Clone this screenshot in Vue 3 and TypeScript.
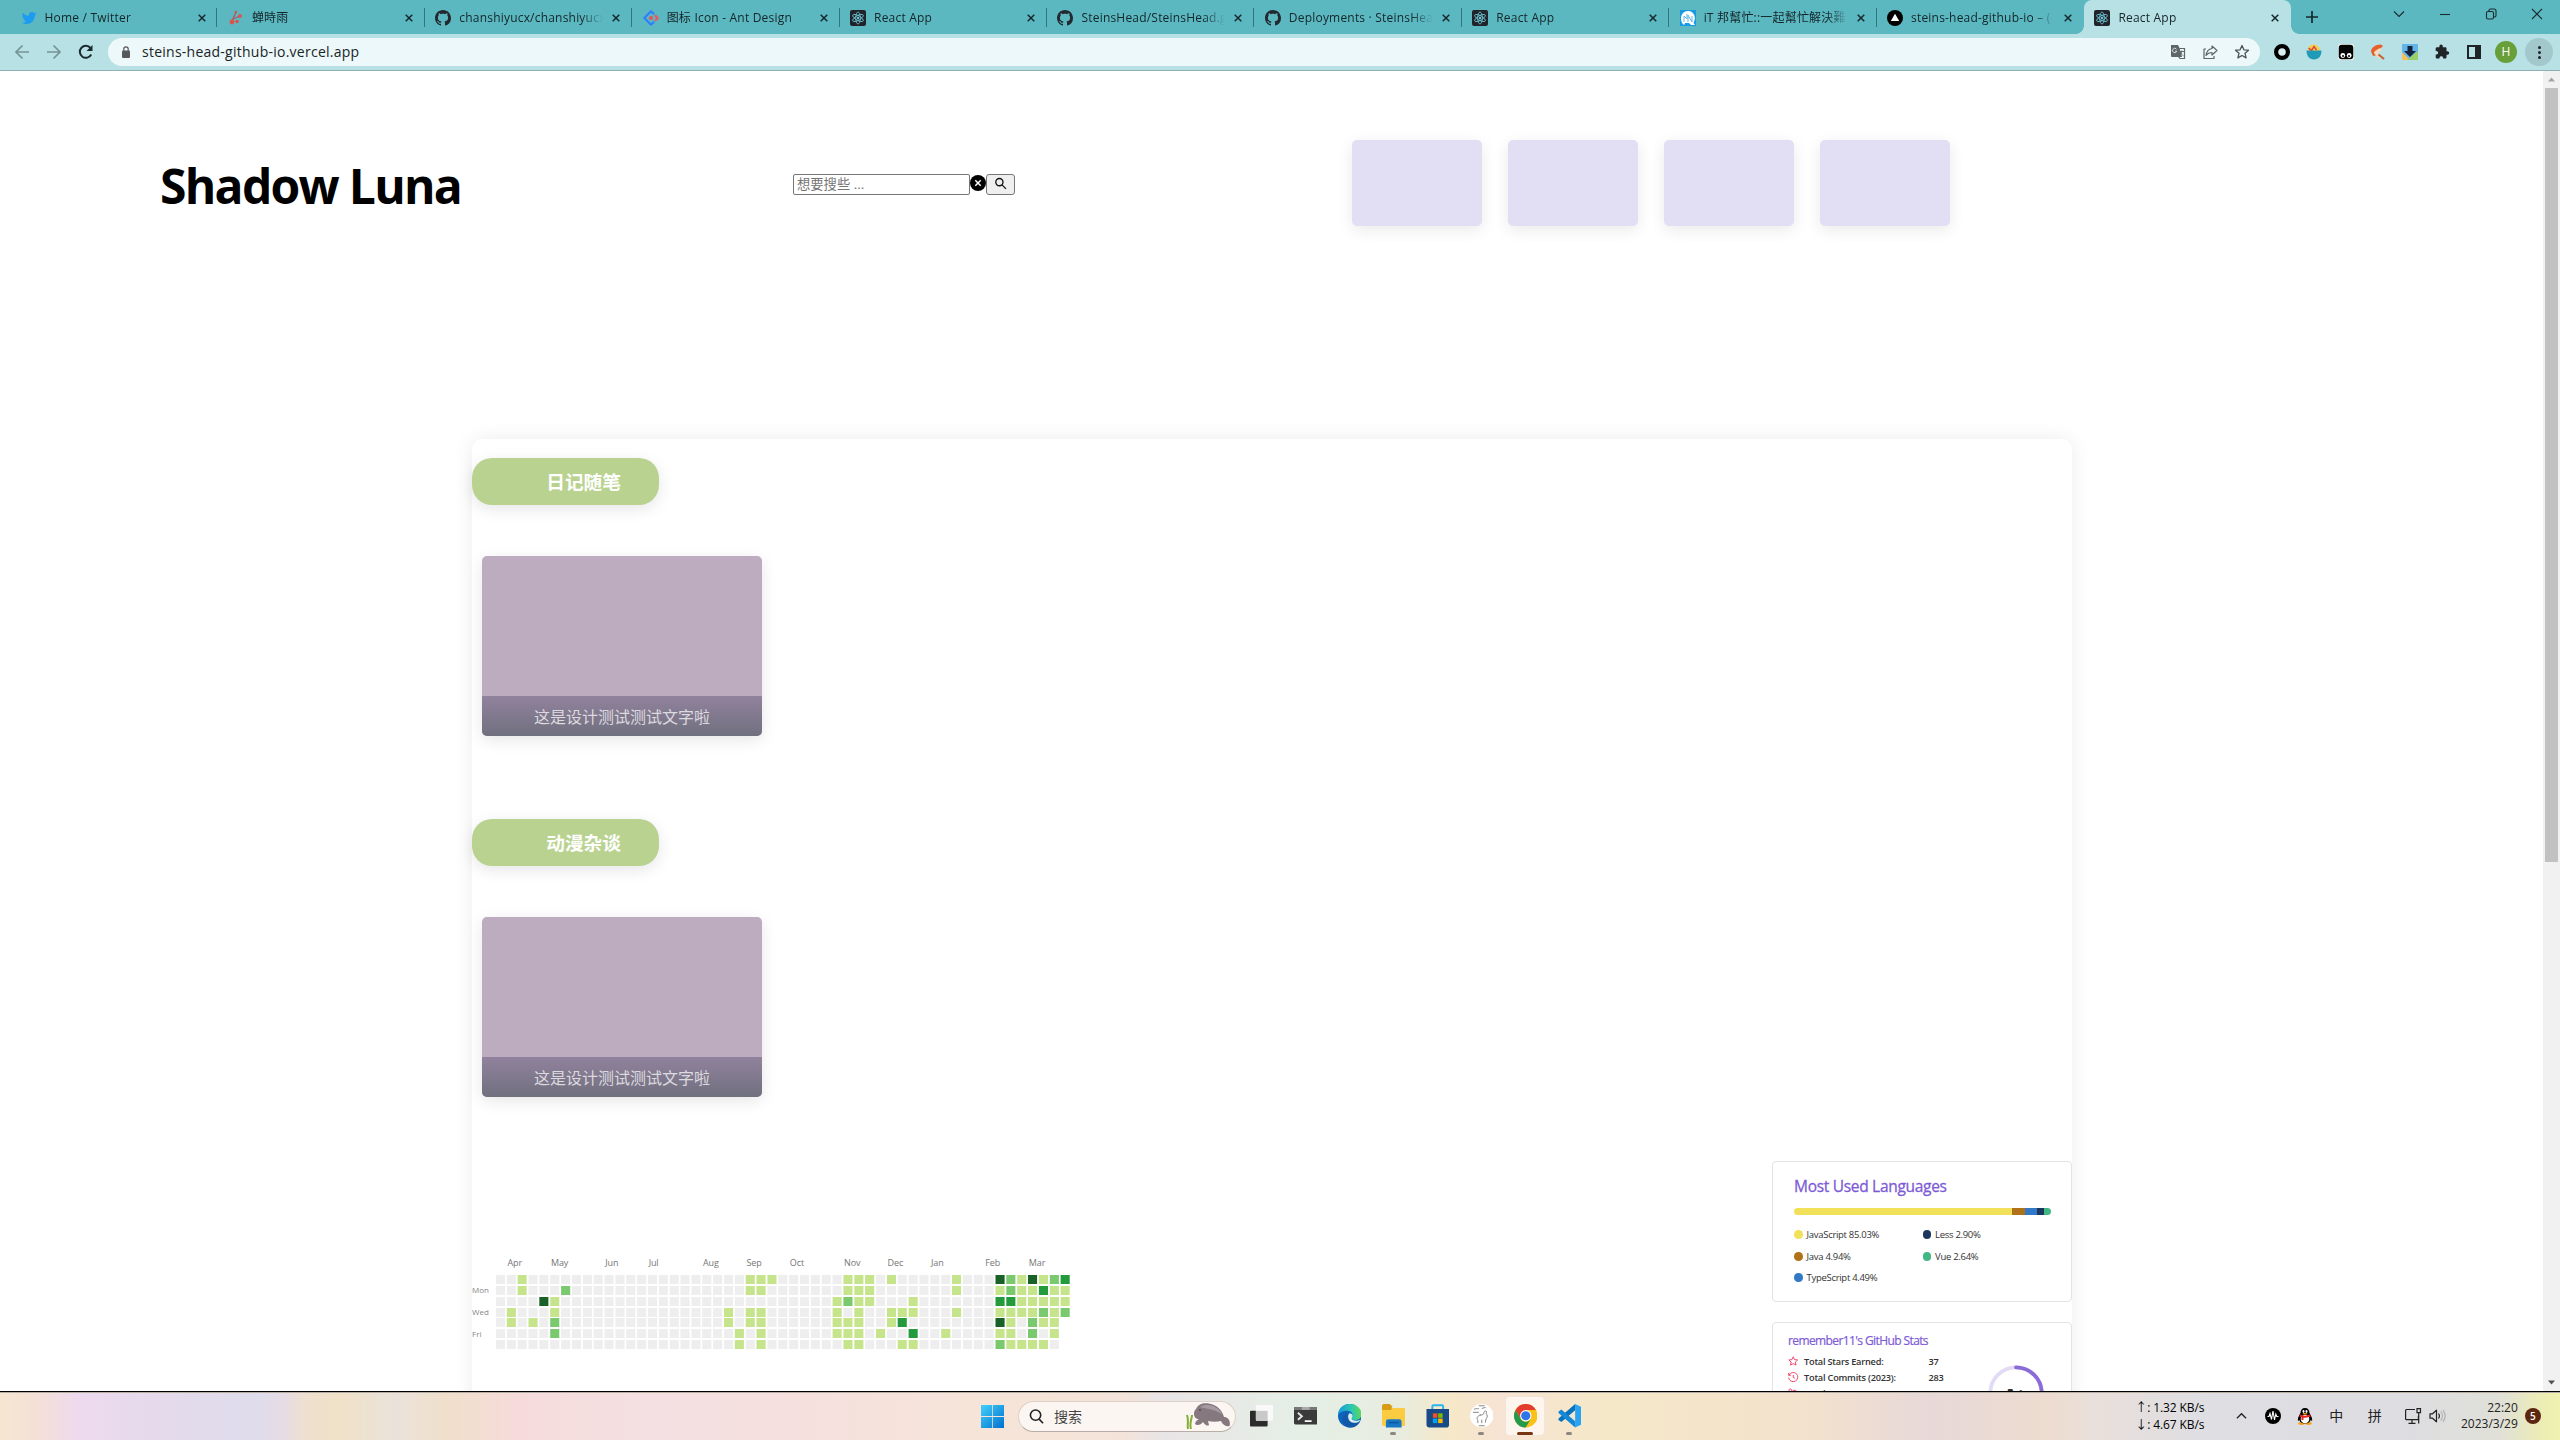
<script setup lang="ts">
interface Tab { icon: string; title: string; active?: boolean }

const tabs: Tab[] = [
  { icon: 'twitter', title: 'Home / Twitter' },
  { icon: 'cicada', title: '蝉時雨' },
  { icon: 'github', title: 'chanshiyucx/chanshiyucx' },
  { icon: 'antd', title: '图标 Icon - Ant Design' },
  { icon: 'react', title: 'React App' },
  { icon: 'github', title: 'SteinsHead/SteinsHead.g' },
  { icon: 'github', title: 'Deployments · SteinsHea' },
  { icon: 'react', title: 'React App' },
  { icon: 'ithelp', title: 'iT 邦幫忙::一起幫忙解決難' },
  { icon: 'vercel', title: 'steins-head-github-io – (' },
  { icon: 'react', title: 'React App', active: true },
]

const sections = [
  { name: '日记随笔', caption: '这是设计测试测试文字啦' },
  { name: '动漫杂谈', caption: '这是设计测试测试文字啦' },
]

// One record per weekday: week index -> contribution level.
const levels: Record<number, number>[] = [
  { 2: 1, 23: 1, 24: 1, 25: 1, 32: 1, 33: 1, 34: 1, 36: 1, 42: 1, 46: 4, 47: 2, 48: 1, 49: 4, 50: 1, 51: 2, 52: 3 },
  { 2: 1, 6: 2, 23: 1, 24: 1, 32: 1, 33: 1, 34: 1, 42: 1, 46: 1, 47: 2, 48: 1, 49: 1, 50: 3, 51: 1, 52: 1 },
  { 4: 4, 5: 1, 31: 1, 32: 2, 33: 1, 34: 1, 38: 1, 46: 3, 47: 3, 48: 1, 49: 1, 50: 1, 51: 1, 52: 1 },
  { 1: 1, 5: 1, 21: 1, 23: 1, 24: 1, 31: 1, 33: 1, 36: 1, 37: 1, 38: 1, 42: 1, 46: 1, 47: 1, 48: 1, 49: 1, 50: 2, 51: 1, 52: 2 },
  { 1: 1, 3: 1, 5: 2, 21: 1, 23: 1, 24: 1, 31: 1, 32: 1, 33: 1, 36: 1, 37: 3, 46: 4, 47: 1, 49: 2, 50: 1, 51: 1 },
  { 5: 2, 22: 1, 24: 1, 31: 1, 32: 1, 33: 1, 35: 1, 38: 3, 41: 1, 46: 1, 47: 1, 49: 2, 51: 1 },
  { 22: 1, 24: 1, 32: 1, 33: 1, 37: 1, 38: 1, 46: 2, 47: 1, 48: 1, 49: 1, 50: 1 },
]
const palette = ['#eeeeee', '#c6e48b', '#7bc96f', '#239a3b', '#196127']
const pitch = 10.86
const cells = levels.flatMap((row, r) =>
  Array.from({ length: r < 4 ? 53 : 52 }, (_, c) => ({
    key: `${r}-${c}`,
    x: Math.round((23.9 + c * pitch) * 10) / 10,
    y: Math.round(21 + r * pitch),
    fill: palette[row[c] ?? 0],
  })),
)
const months: [string, number][] = [
  ['Apr', 1], ['May', 5], ['Jun', 10], ['Jul', 14], ['Aug', 19], ['Sep', 23],
  ['Oct', 27], ['Nov', 32], ['Dec', 36], ['Jan', 40], ['Feb', 45], ['Mar', 49],
]

const languages = [
  { name: 'JavaScript', pct: '85.03', color: '#f1e05a', w: 218 },
  { name: 'Java', pct: '4.94', color: '#b07219', w: 13 },
  { name: 'TypeScript', pct: '4.49', color: '#3178c6', w: 12 },
  { name: 'Less', pct: '2.90', color: '#1d365d', w: 7 },
  { name: 'Vue', pct: '2.64', color: '#41b883', w: 7 },
]

const apps = [
  { name: 'taskview', state: '' },
  { name: 'terminal', state: '' },
  { name: 'edge', state: '' },
  { name: 'files', state: 'open' },
  { name: 'store', state: '' },
  { name: 'sketch', state: 'open' },
  { name: 'chrome', state: 'focus' },
  { name: 'vscode', state: 'open' },
]
</script>

<template>
  <div class="screen">
    <header class="tabs">
      <div v-for="(t, i) in tabs" :key="i" class="tab" :class="{ active: t.active, plain: i === 9 }">
        <svg class="fav" viewBox="0 0 16 16">
          <path v-if="t.icon === 'twitter'" fill="#1d9bf0" d="M15.5 3.5c-.6.3-1.100.4-1.700.5.6-.4 1-.9 1.300-1.600-.6.300-1.200.6-1.900.7A3 3 0 0 0 8 5.800C5.500 5.700 3.300 4.500 1.800 2.700c-.8 1.400-.4 3.100.9 4-.5 0-.9-.1-1.300-.4 0 1.500 1 2.700 2.400 3-.4.1-.9.1-1.300 0 .4 1.200 1.500 2 2.800 2.100-1.300 1-2.800 1.400-4.500 1.300 5.600 3.500 13.100.2 13.100-7.600.6-.4 1.200-1 1.600-1.600z" />
          <g v-else-if="t.icon === 'cicada'">
            <path d="M8 2L4 11M5 9L12 6" stroke="#b2555c" stroke-width="1.300" fill="none" />
            <circle cx="7.800" cy="2" r="1.200" fill="#dc4f48" /><circle cx="12" cy="6" r="1.900" fill="#d9534a" />
            <circle cx="4" cy="12" r="2.400" fill="#e05248" /><circle cx="9" cy="11.500" r="1.800" fill="#d9534a" />
          </g>
          <path v-else-if="t.icon === 'github'" fill="#24292f" fill-rule="evenodd" d="M8 0C3.580 0 0 3.580 0 8c0 3.540 2.290 6.530 5.470 7.590.4.070.55-.17.55-.38 0-.19-.01-.82-.01-1.490-2.010.37-2.530-.49-2.690-.94-.09-.23-.48-.94-.82-1.130-.28-.15-.68-.52-.01-.53.63-.01 1.080.58 1.230.82.72 1.210 1.870.87 2.330.66.070-.52.28-.87.51-1.070-1.780-.2-3.640-.89-3.640-3.950 0-.87.31-1.590.82-2.150-.08-.2-.36-1.020.08-2.120 0 0 .67-.21 2.200.82.64-.18 1.320-.27 2-.27s1.360.09 2 .27c1.530-1.040 2.200-.82 2.200-.82.44 1.100.16 1.920.08 2.120.51.56.82 1.270.82 2.150 0 3.070-1.870 3.750-3.650 3.950.29.25.54.73.54 1.480 0 1.070-.01 1.930-.01 2.200 0 .21.15.46.55.38A8 8 0 0 0 16 8c0-4.420-3.580-8-8-8z" />
          <g v-else-if="t.icon === 'antd'" fill="none" stroke-width="2.200" stroke-linecap="round" stroke-linejoin="round">
            <path d="M10.500 3.600L8 1.300 1.300 8 8 14.700l2.500-2.500" stroke="#2f80fa" /><path d="M12.600 5.900L14.700 8l-2.100 2.100" stroke="#f2545e" />
            <circle cx="8" cy="8" r="1.900" fill="#f04a55" stroke="none" />
          </g>
          <g v-else-if="t.icon === 'react'">
            <rect width="16" height="16" rx="2" fill="#20232a" />
            <g fill="none" stroke="#72cbdc" stroke-width=".8"><ellipse cx="8" cy="8" rx="6" ry="2.300" transform="rotate(30 8 8)" /><ellipse cx="8" cy="8" rx="6" ry="2.300" transform="rotate(90 8 8)" /><ellipse cx="8" cy="8" rx="6" ry="2.300" transform="rotate(150 8 8)" /></g>
            <circle cx="8" cy="8" r="1.200" fill="#72cbdc" />
          </g>
          <g v-else-if="t.icon === 'ithelp'">
            <rect width="16" height="16" fill="#189be4" /><path d="M8 1C4 1 1 4 1 8.500 1 12 2.500 14 4 15l1-2h4l2 2 4 0-1.500-2C17 6 13 1 8 1z" fill="#fff" />
            <path d="M4 12V6l3 3V4m1 8V5l4 7V6" stroke="#65b9e8" fill="none" />
          </g>
          <g v-else><circle cx="8" cy="8" r="8" fill="#000" /><path d="M8 3.800l4.200 7.200H3.800z" fill="#fff" /></g>
        </svg>
        <span class="tab-title">{{ t.title }}</span>
        <svg class="x" viewBox="0 0 8 8"><path d="M.7.7l6.600 6.600M7.300.7L.7 7.300" stroke="#16282b" stroke-width="1.500" /></svg>
      </div>
      <svg class="plus" viewBox="0 0 12 12"><path d="M6 0v12M0 6h12" stroke="#16282b" stroke-width="1.700" /></svg>
      <div class="winctl">
        <svg viewBox="0 0 12 12"><path d="M1 3.500l5 5 5-5" /></svg>
        <svg viewBox="0 0 12 12"><path d="M1 6.500h10" /></svg>
        <svg viewBox="0 0 12 12"><rect x="1.500" y="3.500" width="7" height="7.500" rx="1.500" /><path d="M4 3V2.500A1.500 1.500 0 0 1 5.500 1H9a2 2 0 0 1 2 2v4.500A1.500 1.500 0 0 1 9.500 9H9" /></svg>
        <svg viewBox="0 0 12 12"><path d="M1 1l10 10M11 1L1 11" /></svg>
      </div>
    </header>

    <div class="toolbar">
      <svg class="nav dim" viewBox="0 0 16 16"><path d="M15 8H2M8.500 1.500L2 8l6.500 6.500" /></svg>
      <svg class="nav dim" viewBox="0 0 16 16"><path d="M1 8h13M7.500 1.500L14 8l-6.500 6.500" /></svg>
      <svg class="nav" viewBox="0 0 16 16"><path d="M13.200 10.500A6 6 0 1 1 12.500 4" stroke-width="2" /><path d="M14.500 1v6h-6z" fill="#1b2b2d" stroke="none" /></svg>
      <div class="omnibox">
        <svg class="lock" viewBox="0 0 10 12"><rect x="1" y="4.500" width="8" height="7.500" rx="1" fill="#55595b" /><path d="M2.800 5V3a2.200 2.200 0 0 1 4.400 0v2" fill="none" stroke="#55595b" stroke-width="1.200" /></svg>
        <span class="url">steins-head-github-io.vercel.app</span>
        <svg class="oi" viewBox="0 0 16 16"><path d="M1 1h7l1.500 3L12 13H2a1 1 0 0 1-1-1z" fill="#5f6668" /><path d="M9 4.500h5.500v10H10l-1.500-2" fill="none" stroke="#5f6668" stroke-width="1.200" /><path d="M6.500 5.200a2.200 2.200 0 1 0 .3 2H5" fill="none" stroke="#dfe9ea" stroke-width=".9" /><path d="M9.500 7.500H14M11.700 6.500v1c0 2-1 3-2 3.800M10.500 8c.7 2 1.500 3 3 3.800" fill="none" stroke="#5f6668" stroke-width=".9" /></svg>
        <svg class="oi" viewBox="0 0 16 16"><path d="M4 5H2v9.500h10V12M10 2l5 4.500-5 4.500V8.500c-3 0-4.500 1-6 3C4.500 7.500 6.500 5 10 4.500z" fill="none" stroke="#5f6668" stroke-width="1.200" stroke-linejoin="round" /></svg>
        <svg class="oi" viewBox="0 0 16 16"><path d="M8 1.500l1.900 4.300 4.600.4-3.500 3.100 1.100 4.600L8 11.500l-4.100 2.400L5 9.300 1.500 6.200l4.600-.4z" fill="none" stroke="#4c5456" stroke-width="1.300" stroke-linejoin="round" /></svg>
      </div>
      <div class="exts">
        <svg viewBox="0 0 16 16"><circle cx="8" cy="8" r="5.900" fill="#d7eff0" stroke="#000" stroke-width="4.200" /></svg>
        <svg viewBox="0 0 16 16"><path d="M1.500 7l1-4 3-2.500 5 .5 3 3 .5 3z" fill="#f4cf4e" /><path d="M2.500 4l3 2.500L8 2.500l2.500 3.500" stroke="#e0463c" stroke-width="1.500" fill="none" /><path d="M.5 6.500h15c0 5-2.500 9-7.500 9s-7.500-4-7.500-9z" fill="#1f9bb8" /></svg>
        <svg viewBox="0 0 16 16"><rect width="16" height="16" rx="3" fill="#fff" /><rect x=".7" y=".7" width="14.600" height="14.600" rx="3" fill="#050505" /><circle cx="4.800" cy="11.500" r="2.400" fill="#fff" /><circle cx="11.200" cy="11.500" r="2.400" fill="#fff" /><circle cx="5" cy="12" r="1" /><circle cx="11" cy="12" r="1" /></svg>
        <svg viewBox="0 0 16 16"><path d="M1 7.500C1 4 5 .5 11 .5l2 1.500-5 5-1 4-4 1z" fill="#e8602c" /><path d="M4 9c0-2 4-4 6-5l2 1.500-4 4.500 4 4-3 1z" fill="#f0dcc0" /><path d="M8.500 10.500l5.500 4.500" stroke="#c4622f" stroke-width="2" /></svg>
        <svg viewBox="0 0 16 16"><rect width="16" height="16" fill="#63b4e8" /><path d="M0 16V8l8 8z" fill="#f6c05c" /><path d="M16 7v9H5z" fill="#9bd067" /><path d="M5.500 2h5v5H14l-6 6-6-6h3.500z" fill="#17233c" /></svg>
        <svg viewBox="0 0 16 16"><path d="M13.500 7.300h-1V4.500c0-.8-.6-1.300-1.300-1.300H8.800v-1a1.700 1.700 0 0 0-3.400 0v1H3c-.8 0-1.300.6-1.300 1.300v2.400h1a1.900 1.900 0 0 1 0 3.700h-1v2.600c0 .8.600 1.300 1.300 1.300h2.500v-1a1.900 1.900 0 0 1 3.600 0v1h2.100c.8 0 1.300-.5 1.300-1.300v-2.500h1a1.700 1.700 0 0 0 0-3.400z" fill="#1f2426" /></svg>
        <svg viewBox="0 0 16 16"><rect x="2" y="2" width="12" height="12" fill="none" stroke="#1f2426" stroke-width="2" /><rect x="9" y="2" width="5" height="12" fill="#1f2426" /></svg>
        <span class="avatar">H</span>
      </div>
      <span class="more"><i></i><i></i><i></i></span>
    </div>

    <div class="viewport">
      <div class="page">
        <div class="top">
          <h1>Shadow Luna</h1>
          <form class="search" @submit.prevent>
            <span class="field">想要搜些 ...</span>
            <svg class="clear" viewBox="0 0 16 16"><circle cx="8" cy="8" r="8" /><path d="M5.300 5.300l5.400 5.400M10.700 5.300l-5.400 5.400" stroke="#fff" stroke-width="1.500" /></svg>
            <span class="go"><svg viewBox="0 0 14 14"><circle cx="5.800" cy="5.500" r="3.900" /><path d="M8.700 8.500l4.200 4.300" /></svg></span>
          </form>
          <div class="tiles"><div v-for="n in 4" :key="n" class="tile"></div></div>
        </div>

        <main class="board">
          <section v-for="s in sections" :key="s.name" class="section">
            <h3>{{ s.name }}</h3>
            <div class="card"><div class="caption">{{ s.caption }}</div></div>
          </section>

          <div class="bottom">
            <svg class="calendar" width="610" height="110" viewBox="0 0 610 110">
              <text v-for="m in months" :key="m[0]" :x="24.600 + m[1] * pitch" y="12" class="month">{{ m[0] }}</text>
              <text x="0" y="39" class="day">Mon</text><text x="0" y="61" class="day">Wed</text><text x="0" y="83" class="day">Fri</text>
              <rect v-for="c in cells" :key="c.key" :x="c.x" :y="c.y" width="9.100" height="9" :fill="c.fill" />
            </svg>
            <aside class="stats">
              <div class="langs">
                <h2>Most Used Languages</h2>
                <div class="bar"><span v-for="l in languages" :key="l.name" :style="{ width: l.w + 'px', background: l.color }"></span></div>
                <div class="legend">
                  <span v-for="l in languages" :key="l.name"><i :style="{ background: l.color }"></i>{{ l.name }} {{ l.pct }}%</span>
                </div>
              </div>
              <div class="github">
                <div class="rows">
                  <h2>remember11's GitHub Stats</h2>
                  <div class="row">
                    <svg viewBox="0 0 16 16"><path d="M8 1.200l2 4.300 4.700.5-3.500 3.200 1 4.700L8 11.600l-4.200 2.300 1-4.700L1.300 6l4.700-.5z" /></svg>
                    <b>Total Stars Earned:</b><b>37</b>
                  </div>
                  <div class="row">
                    <svg viewBox="0 0 16 16"><path d="M1 1.500V5h3.500M1.500 5A7 7 0 1 1 1 8.500M8 4.500V8.500l2.500 1" /></svg>
                    <b>Total Commits (2023):</b><b>283</b>
                  </div>
                  <div class="row">
                    <svg viewBox="0 0 16 16"><circle cx="3.500" cy="3.500" r="2" /><circle cx="12.500" cy="12.500" r="2" /><path d="M3.500 5.500V15M7 3.500h4a1.500 1.500 0 0 1 1.500 1.500v5.500" /></svg>
                    <b>Total PRs:</b><b>9</b>
                  </div>
                </div>
                <svg class="ring" width="56" height="56" viewBox="0 0 56 56">
                  <circle cx="28" cy="28" r="25.700" fill="none" stroke="#e3dbf6" stroke-width="3.800" />
                  <path d="M28 2.300A25.700 25.700 0 0 1 28 53.700" fill="none" stroke="#8a6bd8" stroke-width="3.800" stroke-linecap="round" />
                  <text x="16.500" y="35" class="rank">A+</text>
                </svg>
              </div>
            </aside>
          </div>
        </main>
      </div>
      <div class="scroll">
        <svg viewBox="0 0 17 17"><path d="M5 10.500h7L8.500 6.500z" fill="#a3a3a3" /></svg>
        <div class="thumb"></div>
        <svg viewBox="0 0 17 17"><path d="M5 6.500h7l-3.500 4z" fill="#505050" /></svg>
      </div>
    </div>

    <footer class="taskbar">
      <svg class="start" viewBox="0 0 24 24">
        <defs><linearGradient id="win" x1="0" y1="0" x2="1" y2="1"><stop offset="0" stop-color="#43d0fb" /><stop offset="1" stop-color="#0070cf" /></linearGradient></defs>
        <path fill="url(#win)" d="M0 0h11.600v11.600H0zM12.400 0H24v11.600H12.400zM0 12.400h11.600V24H0zM12.400 12.400H24V24H12.400z" />
      </svg>
      <div class="find">
        <svg class="mag" viewBox="0 0 16 16"><circle cx="7" cy="6.500" r="5.500" /><path d="M10.800 10.800l4.200 4.400" /></svg>
        <span>搜索</span>
        <svg class="manatee" viewBox="0 0 44 26">
          <path d="M2 26c-1-5 1-8-1-14M5 26c-2-6 1-10 1-14" stroke="#84ad35" stroke-width="2" fill="none" />
          <path d="M10 6C12 1 17-.5 23 .5 31 2 36 7 38 14c4 0 7 4 5.500 9-3 1-7-1-8.500-5-4 1-9 1-13 0l1 4c-2 1.500-4 0-6-3-2 3-6 4-8 2 .5-3 2.500-4 4-5-3 0-5-2-5-5 0-2 .5-4 2-5z" fill="#85787e" />
          <path d="M14 4c7-4 17-2 22 7-6-4-14-5-22-7z" fill="#a79aa1" /><circle cx="14" cy="7" r=".8" fill="#2e292c" />
        </svg>
      </div>
      <div class="apps">
        <div v-for="a in apps" :key="a.name" class="app" :class="a.state">
          <svg viewBox="0 0 24 24">
            <g v-if="a.name === 'taskview'"><rect x="0" y="7" width="18" height="16" rx="1" fill="#2b2b2b" /><rect x="6" y="1" width="18" height="16" rx="1" fill="#f9f9f9" /><rect x="6" y="7" width="12" height="10" fill="#c9c9c9" /></g>
            <g v-else-if="a.name === 'terminal'"><rect y="3" width="24" height="18" rx="1.500" fill="#3a3a3b" /><path d="M1.500 3h21A1.500 1.500 0 0 1 24 4.500V6H0V4.500A1.500 1.500 0 0 1 1.500 3z" fill="#777" /><path d="M8 3h8v3H8z" fill="#aaa" /><path d="M4 9l4 3.500L4 16" fill="none" stroke="#e5e5e5" stroke-width="2" /><path d="M11 17.500h7" stroke="#fff" stroke-width="1.800" /></g>
            <g v-else-if="a.name === 'edge'">
              <defs><linearGradient id="edge" x1="0" y1=".4" x2="1" y2=".3"><stop offset="0" stop-color="#159bdc" /><stop offset=".6" stop-color="#2ec9b0" /><stop offset="1" stop-color="#63d94c" /></linearGradient></defs>
              <circle cx="12" cy="12" r="12" fill="#0d62ba" /><path d="M0 12C0 4.500 5.500 0 12 0c7 0 12 5 12 10.500 0 4-3 6-6 6-2.500 0-4-1-4-2 0-.8 1-1 1-3 0-2.500-2.500-4.500-6-4.500-4 0-8 2-9 5z" fill="url(#edge)" /><path d="M22.500 17.500C20.500 21.500 17 24 13 24c-5 0-8-4-8-8 0-3.500 2-6 5-7-2 5 1 9.500 6 9.500 2.500 0 4.500-.5 6.500-1z" fill="#1358a8" /><path d="M11.500 9.500c2 0 3.500 1 3.500 2.500 0 1.500-1 1.800-1 2.700 0 1.300 2 2.300 4.500 2.300 2 0 3.500-.5 4.700-1.500-1.200 3-3.700 3.700-7 3.700-5 0-7.500-6-4.700-9.700z" fill="#d5eee9" />
            </g>
            <g v-else-if="a.name === 'files'"><path d="M0 2a2 2 0 0 1 2-2h6l3 3h-1v5H0z" fill="#d99a15" /><path d="M0 6h9l2-2h11a2 2 0 0 1 2 2v15a1.500 1.500 0 0 1-1.500 1.500h-21A1.500 1.500 0 0 1 0 21z" fill="#fbcb41" /><path d="M4 24v-6a2.500 2.500 0 0 1 2.500-2.500h11A2.500 2.500 0 0 1 20 18v6z" fill="#1778c6" /><path d="M7 19h10" stroke="#0c579b" stroke-width="1.500" /></g>
            <g v-else-if="a.name === 'store'"><path d="M6.500 6V2.200a1 1 0 0 1 1-1h9a1 1 0 0 1 1 1V6" fill="none" stroke="#2bb3ef" stroke-width="2" /><path d="M.5 5h23v16a3 3 0 0 1-3 3h-17a3 3 0 0 1-3-3z" fill="#174a87" /><path d="M7 9.500h4.600v4.600H7z" fill="#f25022" /><path d="M12.400 9.500H17v4.600h-4.600z" fill="#7fba00" /><path d="M7 14.900h4.600v4.600H7z" fill="#00a4ef" /><path d="M12.400 14.900H17v4.600h-4.600z" fill="#ffb900" /></g>
            <g v-else-if="a.name === 'sketch'"><circle cx="12" cy="12" r="12" fill="#fff" /><path d="M4 5.500c2-1.500 3 0 5-1M3 8.500h6M10 10.500c1 1 3 1 4-.5 0-2 1-3 2-3s1 2 .500 3c1.500 1 1.500 4 0 5l-1 4M8 19.500v-3c-2-2 0-5 3-5M12 19.500v-3.500M12 4.500l4-1M9 1.800h6M9 22.200h6" stroke="#777" stroke-width=".9" fill="none" /></g>
            <g v-else-if="a.name === 'chrome'"><circle cx="12" cy="12" r="12" fill="#fbc116" /><path d="M12 6h10.400A12 12 0 0 0 1.600 6l5.200 9z" fill="#e33b2e" /><path d="M1.600 6A12 12 0 0 0 12 24l5.200-9A6 6 0 0 1 6.800 15z" fill="#269a4b" /><circle cx="12" cy="12" r="5.800" fill="#fff" /><circle cx="12" cy="12" r="4.700" fill="#2f74e8" /></g>
            <g v-else><path d="M17.500 0L24 3v18l-6.500 3z" fill="#2aa4f2" /><path d="M17.500 0v6.500L3.500 18.500.5 16.300v-1.500z" fill="#0872bd" /><path d="M17.500 24v-6.500L3.500 5.500.5 7.700v1.500z" fill="#1288d6" /></g>
          </svg>
        </div>
      </div>
      <div class="net"><span>↑: 1.32 KB/s</span><span>↓: 4.67 KB/s</span></div>
      <div class="tray">
        <svg class="chev" viewBox="0 0 12 8"><path d="M1 6.500l5-5 5 5" fill="none" stroke="#222" stroke-width="1.400" /></svg>
        <svg class="wave" viewBox="0 0 16 16"><circle cx="8" cy="8" r="8" /><path d="M2.500 8.500h1.500l1-3 1.500 6L8 3l1.500 9 1.300-6 1 2.500h1.700" stroke="#fff" stroke-width="1.100" fill="none" /></svg>
        <svg class="qq" viewBox="0 0 16 17"><ellipse cx="4.500" cy="15.500" rx="3.300" ry="1.400" fill="#f5a21b" /><ellipse cx="11.500" cy="15.500" rx="3.300" ry="1.400" fill="#f5a21b" /><path d="M8 0C5 0 3.500 2 3.500 5 2.500 7 .8 9 .8 12c0 1.200.8 1 1.500 0 .6 2 2.500 3.500 5.700 3.500s5.100-1.500 5.700-3.500c.7 1 1.500 1.200 1.500 0 0-3-1.700-5-2.700-7 0-3-1.500-5-4.500-5z" /><ellipse cx="8" cy="11" rx="4.300" ry="4.200" fill="#fff" /><path d="M3 6.500c3 1.500 7 1.500 10 0l.7 2c-3 1.500-8.500 1.500-11.400 0zM4.500 9h2v3h-2z" fill="#e52422" /><ellipse cx="6.500" cy="3.500" rx="1" ry="1.400" fill="#fff" /><ellipse cx="9.500" cy="3.500" rx="1" ry="1.400" fill="#fff" /><ellipse cx="8" cy="5.700" rx="2.500" ry=".8" fill="#f5a21b" /></svg>
        <span class="ime">中</span>
        <span class="ime pin">拼</span>
        <svg class="pc" viewBox="0 0 17 16"><path d="M10 1.500H1.500A1 1 0 0 0 .6 2.500v8.200a1 1 0 0 0 1 1h10.800a1 1 0 0 0 1-1V8M7 12v3M3.500 15.300h7M12 .7h3.500v4H12zM13.700 5v10.500" fill="none" stroke="#222" stroke-width="1.200" /></svg>
        <svg class="vol" viewBox="0 0 17 14"><path d="M1 4.800h2.500L7.500 1.200v11.600L3.500 9.200H1z" fill="none" stroke="#222" stroke-width="1.200" stroke-linejoin="round" /><path d="M9.500 4.500a4 4 0 0 1 0 5" fill="none" stroke="#222" stroke-width="1.100" /><path d="M11.700 2.500a7 7 0 0 1 0 9M14 1a9.500 9.500 0 0 1 0 12" fill="none" stroke="#aaa" stroke-width="1.100" /></svg>
        <div class="clock"><span>22:20</span><span>2023/3/29</span></div>
        <span class="count">5</span>
      </div>
    </footer>
  </div>
</template>

<style>
body { margin: 0; overflow: hidden; }
</style>

<style scoped>
* { box-sizing: border-box; }
svg { display: block; flex: none; }
.screen { width: 2560px; height: 1440px; display: flex; flex-direction: column; background: #fff; overflow: hidden; font-family: "Open Sans", "Noto Sans CJK SC", sans-serif; color: #000; }

.tabs { height: 34px; flex: none; display: flex; background: #5bb8c1; padding-left: 10px; }
.tab { width: 207.400px; height: 34px; flex: none; display: flex; align-items: center; padding: 1px 0 0 10.500px; background: linear-gradient(#34747c, #34747c) right 0 top 8px / 1px 19px no-repeat; }
.tab.plain { background: none; }
.tab.active { position: relative; background: #b7e1e4; border-radius: 8px 8px 0 0; }
.tab.active::before, .tab.active::after { content: ""; position: absolute; bottom: 0; width: 8px; height: 8px; }
.tab.active::before { left: -8px; background: radial-gradient(circle at 0 0, transparent 7.500px, #b7e1e4 8px); }
.tab.active::after { right: -8px; background: radial-gradient(circle at 100% 0, transparent 7.500px, #b7e1e4 8px); }
.fav { width: 16px; height: 16px; margin-right: 8px; }
.tab-title { width: 144px; flex: none; font-size: 12px; letter-spacing: .2px; line-height: 18px; white-space: nowrap; color: #152528; -webkit-mask-image: linear-gradient(90deg, #000 122px, transparent 144px); mask-image: linear-gradient(90deg, #000 122px, transparent 144px); }
.x { width: 8px; height: 8px; margin-left: 9px; }
.plus { width: 12px; height: 12px; margin: 11px 0 0 15px; }
.winctl { margin: 8px 17.500px 0 auto; display: flex; gap: 33.700px; }
.winctl svg { width: 12px; height: 12px; fill: none; stroke: #1b2c2e; stroke-width: 1.100; }

.toolbar { height: 37px; flex: none; display: flex; align-items: center; background: #b7e1e4; border-bottom: 1px solid #8fb0b4; padding: 0 7px 0 14px; }
.nav { width: 16px; height: 16px; margin-right: 16px; fill: none; stroke: #1b2b2d; stroke-width: 1.700; }
.nav.dim { stroke: #789396; }
.omnibox { width: 2151.500px; height: 28px; margin-left: -2px; border-radius: 14px; background: #ecf8f9; display: flex; align-items: center; padding: 0 9.500px 0 13px; }
.lock { width: 10px; height: 12px; }
.url { font-size: 14px; letter-spacing: .25px; margin-left: 11px; margin-right: auto; color: #1a2426; line-height: 20px; }
.oi { width: 16px; height: 16px; margin-left: 16px; }
.exts { display: flex; align-items: center; gap: 16px; margin-left: 14.500px; }
.exts svg { width: 16px; height: 16px; }
.avatar { width: 22px; height: 22px; margin-left: -3px; border-radius: 50%; background: #689f38; color: #fff; font-size: 12px; line-height: 22px; text-align: center; }
.more { width: 28px; height: 28px; margin-left: auto; border-radius: 50%; background: #a2c8cc; display: flex; flex-direction: column; align-items: center; justify-content: center; gap: 2px; }
.more i { width: 3px; height: 3px; border-radius: 50%; background: #1f2426; }

.viewport { height: 1320px; flex: none; display: flex; overflow: hidden; }
.page { width: 2543px; flex: none; }
.scroll { width: 17px; background: #f1f1f1; display: flex; flex-direction: column; }
.scroll svg { width: 17px; height: 17px; }
.thumb { width: 13px; height: 774px; margin: 0 2px auto; background: #c1c1c1; }

.top { height: 368px; display: flex; align-items: flex-start; padding-left: 160px; }
h1 { margin: 82px 0 0; width: 633px; font-size: 48px; line-height: 66px; font-weight: 700; letter-spacing: -1.700px; white-space: nowrap; }
.search { display: flex; margin: 103px 0 0; width: 559px; }
.field { width: 177px; height: 21px; border: 1px solid #767676; border-radius: 2px; padding-left: 3px; font-size: 13.300px; line-height: 18px; color: #757575; }
.clear { width: 16px; height: 16px; margin-top: 1px; }
.go { width: 29px; height: 21px; border: 1px solid #767676; border-radius: 3px; background: #efefef; display: flex; justify-content: center; padding-top: 2px; }
.go svg { width: 13px; height: 13px; fill: none; stroke: #111; stroke-width: 1.400; }
.tiles { display: flex; gap: 26px; margin-top: 69px; }
.tile { width: 130px; height: 86px; border-radius: 5px; background: #e2dff4; box-shadow: 0 4px 16px rgba(0, 0, 0, .09); }

.board { width: 1600px; height: 1400px; margin-left: 472px; border-radius: 10px; box-shadow: 0 0 20px rgba(0, 0, 0, .08); padding-top: 19px; }
.section { height: 361px; }
h3 { margin: 0; width: 187px; height: 47px; border-radius: 20px; background: #b9d290; box-shadow: 0 4px 16px rgba(0, 0, 0, .1); color: #fff; font-size: 18.720px; line-height: 48px; text-align: right; padding-right: 38px; font-weight: 700; }
.card { width: 280px; height: 180px; margin: 51px 0 0 10px; border-radius: 5px; overflow: hidden; background: #bdabc0; box-shadow: 0 4px 16px rgba(0, 0, 0, .1); display: flex; align-items: flex-end; }
.caption { width: 280px; height: 40px; background: linear-gradient(#91829d, #70707f); color: #dcd9df; font-size: 16px; line-height: 42px; text-align: center; }

.bottom { display: flex; }
.calendar { margin-top: 74px; }
.month { font-size: 9px; fill: #767676; letter-spacing: -.1px; }
.day { font-size: 8px; fill: #868686; }
.stats { margin-left: auto; margin-top: -19px; width: 300px; }
.langs { height: 141px; border: 1px solid #e4e2e2; border-radius: 4px; padding: 14px 20px 0 21px; }
h2 { margin: 0; font-weight: 400; color: #7d5bd6; white-space: nowrap; }
.langs h2 { font-size: 15.500px; line-height: 21px; letter-spacing: -.3px; -webkit-text-stroke: .3px #7d5bd6; }
.bar { width: 257px; height: 7px; margin-top: 11px; display: flex; border-radius: 4px; overflow: hidden; }
.legend { margin-top: 9px; height: 65px; display: flex; flex-direction: column; flex-wrap: wrap; align-content: flex-start; }
.legend span { width: 128.500px; height: 21.500px; display: flex; align-items: center; font-size: 9.500px; letter-spacing: -.3px; color: #333; }
.legend i { width: 8.600px; height: 8.600px; border-radius: 50%; margin-right: 4px; }
.github { margin-top: 20px; height: 170px; border: 1px solid #e4e2e2; border-radius: 4px; padding: 12px 27px 0 15px; display: flex; justify-content: space-between; }
.github h2 { font-size: 12px; line-height: 17px; margin-bottom: 4px; margin-top: -3px; letter-spacing: -.6px; -webkit-text-stroke: .2px #7d5bd6; }
.row { display: flex; height: 16px; align-items: center; font-size: 9.200px; font-weight: 600; color: #333; }
.row svg { width: 10.500px; height: 10.500px; margin-right: 5.500px; fill: none; stroke: #f0466b; stroke-width: 1.500; }
.row b { font-weight: 600; width: 124.500px; white-space: nowrap; letter-spacing: -.2px; }
.row b + b { width: 20px; }
.ring { margin-top: 30px; }
.rank { font-size: 16px; font-weight: 800; fill: #333; }

.taskbar { height: 49px; flex: none; border-top: 1px solid #000; box-shadow: inset 0 1px #b5aca4; display: flex; align-items: center; padding-left: 981px; background: linear-gradient(90deg, #f5e6d0 0, #f4e0d8 40px, #eed9ee 78px, #e5daeb 150px, #dfdcec 255px, #e6dce4 285px, #efe0cf 305px, #f0e1c8 340px, #eae2da 395px, #f0e0cb 445px, #f6dbdb 520px, #f4e0e2 650px, #f5e0de 800px, #f6e4d8 980px, #f4e3d8 1120px, #e9e4e6 1160px, #e5efe6 1300px, #e8ecdf 1400px, #f6e8c8 1450px, #f7e3d3 1500px, #f5e8c8 1600px, #f3e2cc 1800px, #e8d8d8 1930px, #eddccf 2050px, #e9dfda 2090px, #dfdee2 2200px, #dddde2 2400px, #e0e0d8 2500px, #ecedb4 2542px, #f0f2b0 2560px); }
.start { width: 23px; height: 23px; }
.find { width: 218px; height: 31px; margin-left: 14px; border-radius: 16px; border: 1px solid #ddd0c8; border-bottom-color: #b9aea7; background: #fbf6f2; display: flex; align-items: center; padding: 0 5px 0 10px; font-size: 14px; color: #444; }
.mag { width: 15px; height: 15px; margin-right: 10px; fill: none; stroke: #222; stroke-width: 1.700; }
.manatee { width: 44px; height: 26px; margin-left: auto; }
.apps { display: flex; margin-left: 6.300px; gap: 6px; }
.app { position: relative; width: 38px; height: 38px; border-radius: 4px; display: flex; align-items: center; justify-content: center; }
.app svg { width: 23.500px; height: 23.500px; }
.app.focus { background: #fdf5ee; box-shadow: 0 0 0 1px #f1e4d8; }
.app.open::after, .app.focus::after { content: ""; position: absolute; bottom: 0; left: 16px; width: 6px; height: 3px; border-radius: 2px; background: #8c8780; }
.app.focus::after { left: 11px; width: 16px; background: #7a3410; }
.net { margin-left: 547px; width: 70px; display: flex; flex-direction: column; font-size: 12px; line-height: 17px; white-space: nowrap; letter-spacing: -.1px; }
.tray { display: flex; align-items: center; color: #222; }
.chev { width: 11px; height: 8px; margin-left: 31px; }
.wave { width: 16px; height: 16px; margin-left: 18px; }
.qq { width: 16px; height: 17px; margin-left: 16px; }
.ime { width: 15px; margin-left: 16px; font-size: 14px; line-height: 20px; }
.pin { margin-left: 23.500px; }
.pc { width: 17px; height: 16px; margin-left: 22px; }
.vol { width: 17px; height: 14px; margin-left: 7px; }
.clock { width: 70px; margin-left: 2px; display: flex; flex-direction: column; align-items: flex-end; font-size: 12px; line-height: 16px; }
.count { width: 16px; height: 16px; margin-left: 7px; border-radius: 50%; background: #5c2610; color: #fff; font-size: 10px; line-height: 16px; text-align: center; font-weight: 600; }
</style>
